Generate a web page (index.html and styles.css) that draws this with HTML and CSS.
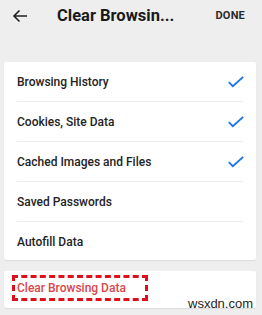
FILE: index.html
```html
<!DOCTYPE html>
<html>
<head>
<meta charset="utf-8">
<link rel="stylesheet" href="styles.css">
</head>
<body>
<div class="screen">
  <header class="topbar">
    <svg class="back" width="16" height="14" viewBox="0 0 16 14"><path d="M15 7H2M7.5 1.5L2 7l5.5 5.5" fill="none" stroke="#222" stroke-width="1.6"/></svg>
    <div class="title">Clear Browsin...</div>
    <div class="done">DONE</div>
  </header>
  <section class="card list">
    <div class="row"><span>Browsing History</span><svg class="check" width="16" height="12" viewBox="0 0 16 12"><path d="M0.8 6.2l4 4L15.2 0.8" fill="none" stroke="#1a73e8" stroke-width="1.8"/></svg></div>
    <div class="row"><span>Cookies, Site Data</span><svg class="check" width="16" height="12" viewBox="0 0 16 12"><path d="M0.8 6.2l4 4L15.2 0.8" fill="none" stroke="#1a73e8" stroke-width="1.8"/></svg></div>
    <div class="row"><span>Cached Images and Files</span><svg class="check" width="16" height="12" viewBox="0 0 16 12"><path d="M0.8 6.2l4 4L15.2 0.8" fill="none" stroke="#1a73e8" stroke-width="1.8"/></svg></div>
    <div class="row"><span>Saved Passwords</span></div>
    <div class="row"><span>Autofill Data</span></div>
  </section>
  <section class="card action">
    <div class="clear-btn">Clear Browsing Data</div>
  </section>
  <div class="watermark">wsxdn.com</div>
</div>
</body>
</html>
```
FILE: styles.css
```css
html, body {
  margin: 0;
  padding: 0;
  background: #eeeeee;
}
.screen {
  position: relative;
  width: 262px;
  height: 315px;
  font-family: Roboto, "Noto Sans", sans-serif;
  color: #212121;
  overflow: hidden;
}
.topbar {
  display: flex;
  align-items: center;
  height: 31px;
  padding: 0 17px 0 12px;
}
.back {
  display: block;
  flex: none;
}
.title {
  margin-left: 29px;
  font-size: 16.5px;
  font-weight: 700;
  color: #1a1a1a;
  flex: 1;
  white-space: nowrap;
}
.done {
  font-size: 11px;
  font-weight: 700;
  color: #2a2a2a;
  letter-spacing: 0.2px;
}
.card {
  background: #fff;
  margin: 0 6px 0 4px;
  border-radius: 2px;
  box-shadow: 0 1px 1px rgba(0,0,0,0.08);
}
.list {
  margin-top: 31px;
  padding: 0 13px;
}
.row {
  display: flex;
  align-items: center;
  justify-content: space-between;
  box-sizing: border-box;
  height: 40px;
  padding-top: 1px;
  border-bottom: 1px solid #ececec;
  font-size: 12px;
  font-weight: 500;
  color: #232323;
}
.row:last-child {
  border-bottom: none;
  height: 38px;
}
.check {
  display: block;
  margin-right: -1px;
}
.action {
  margin-top: 11px;
  height: 37px;
  padding: 4px 0 0 8px;
  box-sizing: border-box;
}
.clear-btn {
  display: inline-flex;
  align-items: center;
  box-sizing: border-box;
  width: 136px;
  height: 26px;
  padding-left: 2px;
  border: 3px dashed #e0101a;
  font-size: 12px;
  font-weight: 500;
  color: #d9474a;
}
.watermark {
  position: absolute;
  left: 188px;
  top: 296px;
  font-family: "Liberation Sans", Arial, sans-serif;
  font-size: 13px;
  color: #1e1e1e;
}
```
